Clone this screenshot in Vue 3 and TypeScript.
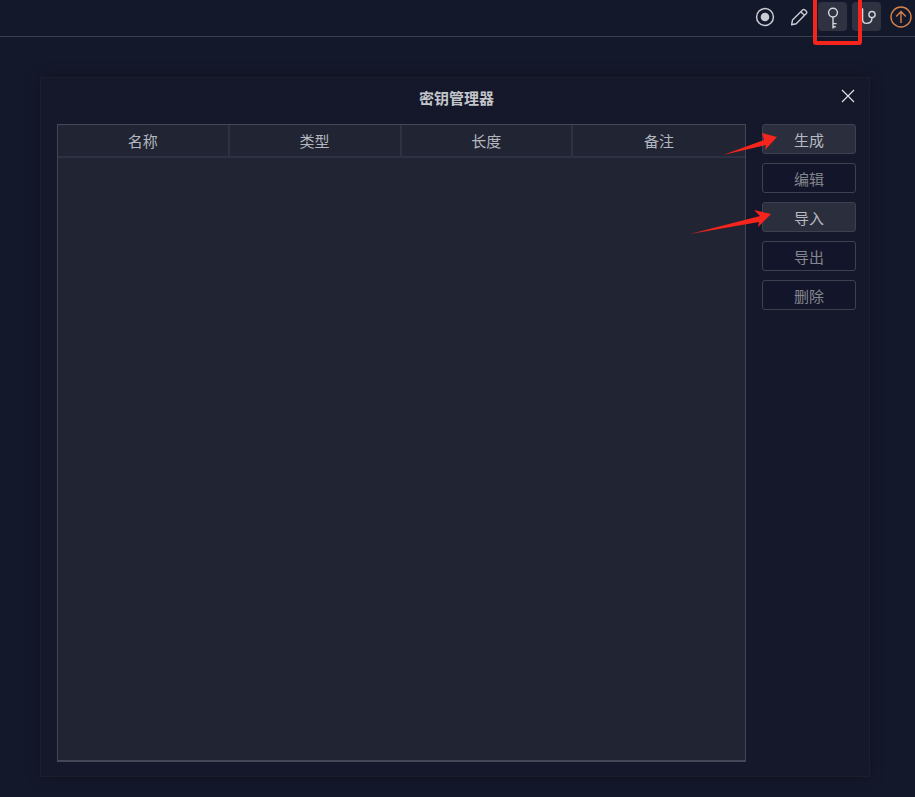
<script setup lang="ts">
const columns = ['名称', '类型', '长度', '备注']
const actions = [
  { label: '生成', active: true },
  { label: '编辑', active: false },
  { label: '导入', active: true },
  { label: '导出', active: false },
  { label: '删除', active: false },
]
</script>

<template>
  <div class="page">
    <header class="toolbar">
      <span class="tool">
        <svg width="20" height="20" viewBox="0 0 20 20" fill="none">
          <circle cx="10" cy="10" r="8.4" stroke="#c9ccd4" stroke-width="1.5" />
          <circle cx="10" cy="10" r="4.3" fill="#c9ccd4" />
        </svg>
      </span>
      <span class="tool">
        <svg width="20" height="20" viewBox="0 0 20 20" fill="none" stroke="#c9ccd4" stroke-width="1.4" stroke-linejoin="round">
          <path d="M2.6 17.8l.9-4.8L13.6 2.9a1.6 1.6 0 0 1 2.3 0l1.4 1.4a1.6 1.6 0 0 1 0 2.3L7.2 16.7z" />
          <path d="M11.8 4.7l3.6 3.6" />
        </svg>
      </span>
      <span class="tool on">
        <svg width="24" height="26" viewBox="0 0 24 26" fill="none" stroke="#d3d6dc" stroke-width="1.4">
          <circle cx="12" cy="8.6" r="4.4" />
          <path d="M12 13v11.4M12 19.6h3.6M12 22.8h2.8" />
        </svg>
      </span>
      <span class="tool on">
        <svg width="24" height="26" viewBox="0 0 24 26" fill="none" stroke="#d3d6dc" stroke-width="1.4">
          <circle cx="17" cy="10.6" r="3.1" />
          <path d="M7.6 4.4v11.2c0 2.4 1.4 3.8 3.8 3.8c3.2 0 5.6-1.6 5.6-5.6M7.6 4.4L5 7" />
        </svg>
      </span>
      <span class="tool">
        <svg width="22" height="22" viewBox="0 0 22 22" fill="none" stroke="#d8824a" stroke-width="1.4">
          <circle cx="11" cy="11" r="10" />
          <path d="M11 17V5.6M6.2 10.4L11 5.6l4.8 4.8" />
        </svg>
      </span>
    </header>

    <section class="dialog">
      <div class="dialog-title">
        <h2>密钥管理器</h2>
        <svg class="close" width="14" height="14" viewBox="0 0 14 14" stroke="#e6e7ea" stroke-width="1.1">
          <path d="M1 1l12 12M13 1L1 13" />
        </svg>
      </div>
      <div class="dialog-body">
        <div class="table">
          <div class="thead">
            <div v-for="col in columns" :key="col" class="th">{{ col }}</div>
          </div>
        </div>
        <div class="actions">
          <button v-for="a in actions" :key="a.label" :class="['btn', { active: a.active }]">{{ a.label }}</button>
        </div>
      </div>
    </section>

    <!-- 截图上的标注 -->
    <div class="mark-box"></div>
    <svg class="marks" width="915" height="797" viewBox="0 0 915 797">
      <path d="M723 155L764 140L762 133L777 137L765 150L766 145Z" fill="#f5241c" />
      <path d="M690 234L760 216L754 210L771 214L758 227L759 222Z" fill="#f5241c" />
    </svg>
  </div>
</template>

<style>
html,
body {
  margin: 0;
  background: #14182b;
}
</style>

<style scoped>
.page {
  position: relative;
  width: 915px;
  height: 797px;
  overflow: hidden;
  background: #14182b;
  font-family: "Liberation Sans", "Noto Sans CJK SC", sans-serif;
}

.toolbar {
  display: flex;
  justify-content: flex-end;
  align-items: center;
  gap: 5px;
  height: 36px;
  padding-bottom: 3px;
  box-sizing: border-box;
  border-bottom: 0;
  box-shadow: 0 1px 0 #3a3d4a;
}

.tool {
  display: flex;
  align-items: center;
  justify-content: center;
  width: 29px;
  height: 29px;
  border-radius: 4px;
}

.tool.on {
  background: #2e3241;
}

.dialog {
  width: 830px;
  height: 700px;
  margin: 41px 0 0 40px;
  box-sizing: border-box;
  border: 1px solid #1c1f2a;
  background: #14182a;
  box-shadow: 0 0 14px rgba(0, 0, 0, 0.28);
  padding: 0 13px 0 16px;
}

.dialog-title {
  position: relative;
  display: flex;
  align-items: center;
  justify-content: center;
  height: 46px;
  padding-bottom: 8px;
  box-sizing: border-box;
}

.dialog-title h2 {
  margin: 0;
  font-size: 15px;
  font-weight: bold;
  color: #c4c6cc;
}

.close {
  position: absolute;
  right: 1px;
  top: 11px;
}

.dialog-body {
  display: flex;
  gap: 16px;
}

.table {
  flex: none;
  width: 689px;
  height: 638px;
  box-sizing: border-box;
  background: #212533;
  border: 1px solid #434756;
  border-bottom-width: 2px;
}

.thead {
  display: grid;
  grid-template-columns: repeat(4, 1fr);
  height: 33px;
  box-sizing: border-box;
  border-bottom: 2px solid #2e3144;
}

.th {
  display: flex;
  align-items: center;
  justify-content: center;
  padding-bottom: 1px;
  font-size: 15px;
  color: #b4b7bf;
  border-right: 2px solid #2e3144;
}

.th:last-child {
  border-right: none;
}

.actions {
  display: flex;
  flex: none;
  flex-direction: column;
  gap: 9px;
}

.btn {
  width: 94px;
  height: 30px;
  padding: 0;
  font: inherit;
  font-size: 15px;
  color: #85878e;
  background: #13162a;
  border: 1px solid #3c404f;
  border-radius: 3px;
}

.btn.active {
  color: #b6b9c0;
  background: #2b2e3d;
}

.mark-box {
  position: absolute;
  left: 813px;
  top: -6px;
  width: 49px;
  height: 51px;
  box-sizing: border-box;
  border: 4px solid #f5241c;
  border-radius: 3px;
}

.marks {
  position: absolute;
  left: 0;
  top: 0;
  pointer-events: none;
}
</style>
